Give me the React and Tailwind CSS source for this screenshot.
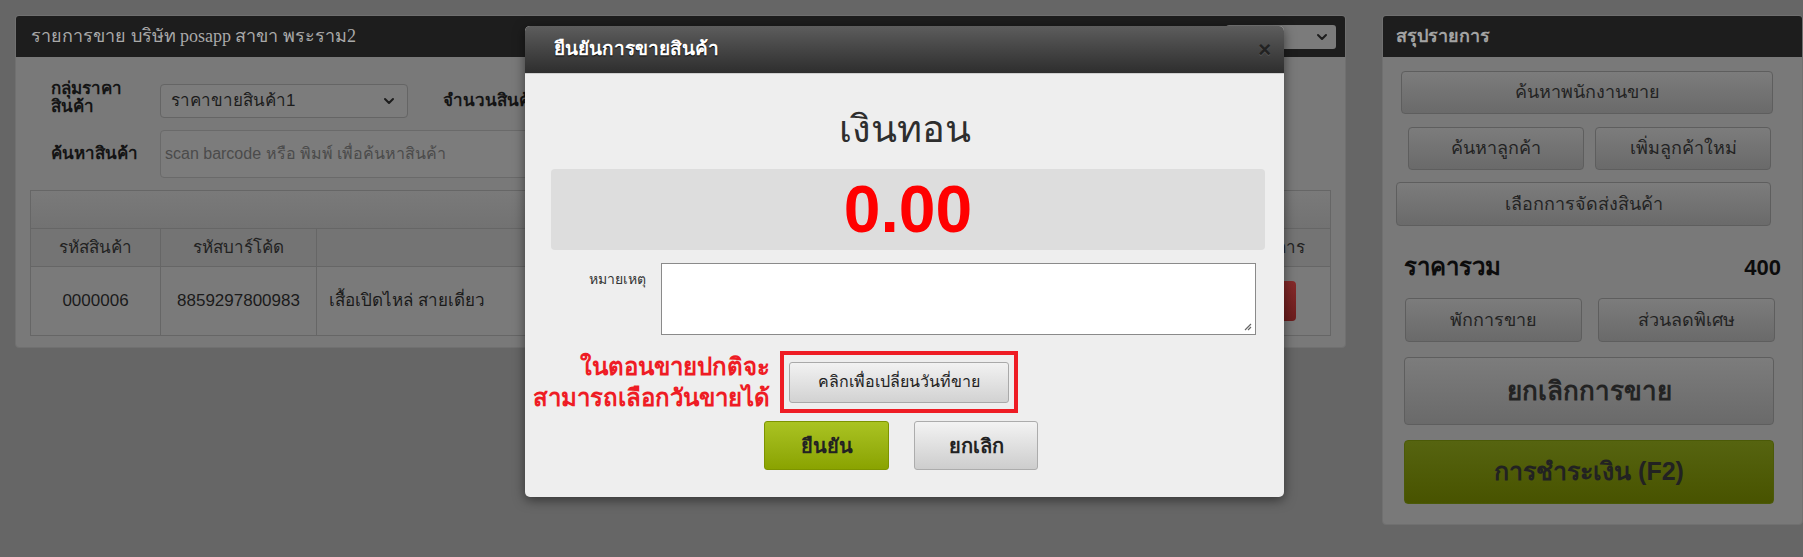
import React from "react";
import { ChevronDown } from "lucide-react";

const font = { fontFamily: "'Liberation Sans', Tahoma, 'Noto Sans', sans-serif" };

const DimButton = ({ className = "", children }) => (
  <div
    className={`flex items-center justify-center rounded-[4px] border border-[#5e5e5e] bg-linear-to-b from-[#7c7c7c] to-[#6a6a6a] text-[#232323] ${className}`}
  >
    {children}
  </div>
);

const SalesPanel = () => (
  <div className="w-[1331px] h-[333px] flex flex-col rounded-[4px] bg-[#797979] border border-[#707070] overflow-hidden">
    <div className="h-[41px] shrink-0 bg-[#1d1d1d] flex items-center justify-between pl-[15px] pr-[9px]">
      <span className="text-[18px] text-[#a9a9a9]" style={{ fontFamily: "'Liberation Serif', serif" }}>
        รายการขาย บริษัท posapp สาขา พระราม2
      </span>
      <div className="w-[110px] h-[24px] rounded-[3px] bg-[#7b7b7b] flex items-center justify-end pr-[6px]">
        <ChevronDown className="w-4 h-4 text-[#1d1d1d]" strokeWidth={3} />
      </div>
    </div>
    <div className="flex flex-col px-[14px] pt-[27px]">
      <div className="flex items-center h-[33px]">
        <div className="w-[130px] pl-[21px] mt-[-6px] text-[17px] font-bold leading-[18px] text-[#141414]">
          <div>กลุ่มราคา</div>
          <div>สินค้า</div>
        </div>
        <div className="w-[248px] h-[34px] rounded-[4px] border border-[#656565] bg-[#7c7c7c] flex items-center justify-between px-[10px] text-[17px] text-[#1c1c1c]">
          <span>ราคาขายสินค้า1</span>
          <ChevronDown className="w-4 h-4 text-[#1c1c1c]" strokeWidth={3} />
        </div>
        <span className="ml-[35px] text-[17px] font-bold text-[#141414]">จำนวนสินค้า</span>
      </div>
      <div className="flex items-center h-[48px] mt-[13px]">
        <div className="w-[130px] pl-[21px] text-[17px] font-bold text-[#141414]">ค้นหาสินค้า</div>
        <div className="w-[1080px] h-[48px] rounded-[4px] border border-[#6a6a6a] bg-[#7c7c7c] flex items-center px-[4px] text-[16px] text-[#4b4b4b]">
          scan barcode หรือ พิมพ์ เพื่อค้นหาสินค้า
        </div>
      </div>
      <div className="mt-[12px] border border-[#666] bg-[#757575]">
        <div className="h-[38px] border-b border-[#666] bg-linear-to-b from-[#7a7a7a] to-[#727272]" />
        <div className="flex h-[38px] border-b border-[#666] text-[17px] text-[#222] bg-[#747474]">
          <div className="w-[130px] flex items-center justify-center border-r border-[#666]">รหัสสินค้า</div>
          <div className="w-[156px] flex items-center justify-center border-r border-[#666]">รหัสบาร์โค้ด</div>
          <div className="flex-1 flex items-center justify-center border-r border-[#666]">ชื่อสินค้า</div>
          <div className="w-[100px] flex items-center justify-center">จัดการ</div>
        </div>
        <div className="flex h-[68px] text-[17px] text-[#1a1a1a] bg-[#7a7a7a]">
          <div className="w-[130px] flex items-center justify-center border-r border-[#666]">0000006</div>
          <div className="w-[156px] flex items-center justify-center border-r border-[#666]">8859297800983</div>
          <div className="flex-1 flex items-center pl-[12px] border-r border-[#666]">เสื้อเปิดไหล่ สายเดี่ยว</div>
          <div className="w-[100px] flex items-center pl-[33px]">
            <div className="w-[33px] h-[40px] rounded-[4px] bg-linear-to-b from-[#862a2a] to-[#6c1d1d]" />
          </div>
        </div>
      </div>
    </div>
  </div>
);

const SummaryPanel = () => (
  <div className="w-[421px] h-[510px] shrink-0 flex flex-col rounded-[4px] bg-[#797979] border border-[#707070] overflow-hidden">
    <div className="h-[41px] shrink-0 bg-[#1d1d1d] flex items-center pl-[13px]">
      <span className="text-[18px] font-bold text-[#a3a3a3]">สรุปรายการ</span>
    </div>
    <div className="flex flex-col pl-[12px] text-[18px]">
      <DimButton className="mt-[14px] ml-[6px] w-[372px] h-[43px]">ค้นหาพนักงานขาย</DimButton>
      <div className="flex mt-[13px] ml-[13px] gap-[11px]">
        <DimButton className="w-[176px] h-[43px]">ค้นหาลูกค้า</DimButton>
        <DimButton className="w-[176px] h-[43px]">เพิ่มลูกค้าใหม่</DimButton>
      </div>
      <DimButton className="mt-[12px] ml-[1px] w-[375px] h-[44px]">เลือกการจัดส่งสินค้า</DimButton>
      <div className="flex justify-between items-center mt-[27px] ml-[9px] w-[377px] h-[28px] font-bold text-[24px] text-[#0c0c0c]">
        <span>ราคารวม</span>
        <span className="text-[22px]">400</span>
      </div>
      <div className="flex mt-[17px] ml-[10px] gap-[16px]">
        <DimButton className="w-[177px] h-[44px]">พักการขาย</DimButton>
        <DimButton className="w-[177px] h-[44px]">ส่วนลดพิเศษ</DimButton>
      </div>
      <DimButton className="mt-[15px] ml-[9px] w-[370px] h-[68px] text-[26px] font-bold">ยกเลิกการขาย</DimButton>
      <div className="mt-[15px] ml-[9px] w-[370px] h-[64px] rounded-[4px] border border-[#4b5a08] bg-linear-to-b from-[#566410] to-[#485300] flex items-center justify-center text-[25px] font-bold text-[#222]">
        การชำระเงิน (F2)
      </div>
    </div>
  </div>
);

const ConfirmModal = () => (
  <div className="absolute left-[525px] top-[26px] w-[759px] h-[471px] rounded-[5px] bg-[#eeeeee] shadow-[0_3px_12px_rgba(0,0,0,0.5)] overflow-hidden flex flex-col">
    <div className="h-[48px] shrink-0 bg-linear-to-b from-[#5d5d5d] to-[#2e2e2e] flex items-center justify-between pl-[29px] pr-[13px] border-b border-[#cfcfcf]">
      <span className="text-[19px] font-bold text-white [text-shadow:0_1px_1px_#000]">ยืนยันการขายสินค้า</span>
      <span className="text-[22px] font-bold leading-none text-[#222] [text-shadow:0_1px_0_#555]">×</span>
    </div>
    <div className="flex flex-col">
      <div className="h-[95px] flex items-center justify-center pt-[16px] text-[38px] text-[#2e2e2e]">เงินทอน</div>
      <div className="ml-[26px] mr-[19px] h-[81px] rounded-[4px] bg-[#dddddd] flex items-center justify-center text-[66px] font-bold text-[#ff0000]">
        0.00
      </div>
      <div className="flex mt-[13px]">
        <div className="w-[121px] text-right pt-[6px] text-[14px] text-[#333]">หมายเหตุ</div>
        <div className="ml-[15px] w-[595px] h-[72px] bg-white border border-[#8a8a8a] relative">
          <svg className="absolute right-[3px] bottom-[3px]" width="8" height="8" viewBox="0 0 8 8">
            <path d="M7 1 L1 7 M7 4 L4 7" stroke="#666" strokeWidth="1.2" />
          </svg>
        </div>
      </div>
      <div className="flex items-center mt-[16px]">
        <div className="w-[245px] text-right whitespace-nowrap text-[24px] font-bold leading-[31px] text-[#ee1c24]">
          <div>ในตอนขายปกติจะ</div>
          <div>สามารถเลือกวันขายได้</div>
        </div>
        <div className="ml-[10px] w-[238px] h-[62px] border-[4px] border-[#ee1c24] flex items-center justify-center">
          <div className="w-[220px] h-[41px] rounded-[3px] border border-[#a9a9a9] bg-linear-to-b from-[#f2f2f2] to-[#d2d2d2] flex items-center justify-center text-[16px] text-[#222]">
            คลิกเพื่อเปลี่ยนวันที่ขาย
          </div>
        </div>
      </div>
      <div className="flex gap-[25px] mt-[8px] ml-[239px]">
        <div className="w-[125px] h-[49px] rounded-[3px] border border-[#7d9400] bg-linear-to-b from-[#aac321] to-[#8aa300] flex items-center justify-center text-[20px] font-bold text-[#222]">
          ยืนยัน
        </div>
        <div className="w-[124px] h-[49px] rounded-[3px] border border-[#acacac] bg-linear-to-b from-[#f3f3f3] to-[#cdcdcd] flex items-center justify-center text-[20px] font-bold text-[#222]">
          ยกเลิก
        </div>
      </div>
    </div>
  </div>
);

export default function App() {
  return (
    <div className="relative w-[1803px] h-[557px] overflow-hidden bg-[#666666]" style={font}>
      <div className="flex items-start gap-[36px] pt-[15px] pl-[15px]">
        <SalesPanel />
        <SummaryPanel />
      </div>
      <ConfirmModal />
    </div>
  );
}
